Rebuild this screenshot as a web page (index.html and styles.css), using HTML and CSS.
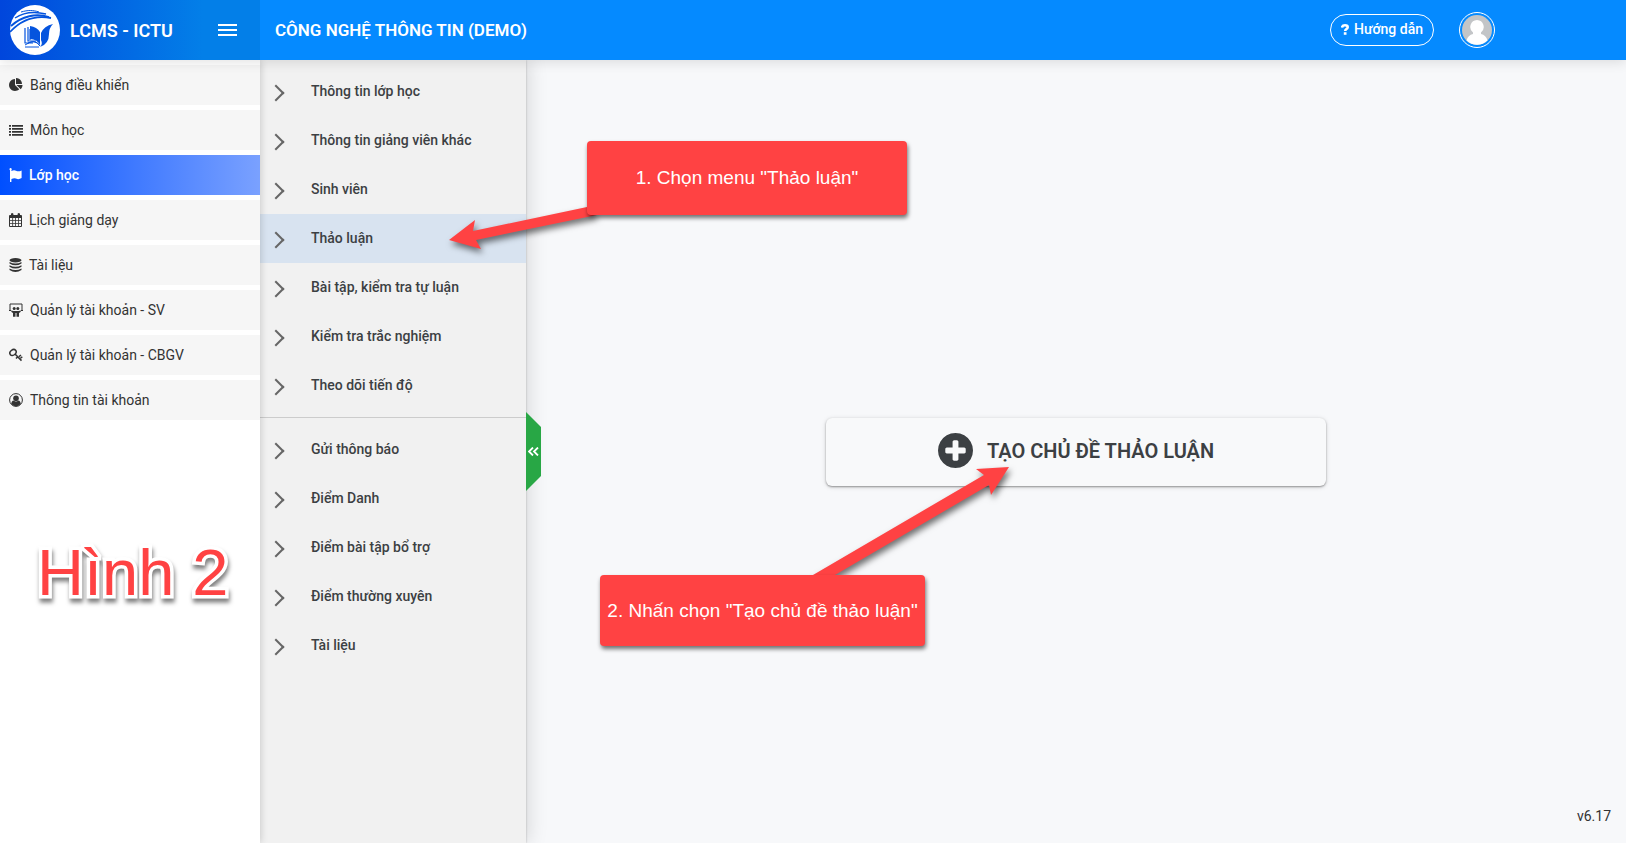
FILE: index.html
```
<!DOCTYPE html>
<html lang="vi">
<head>
<meta charset="utf-8">
<title>LCMS - ICTU</title>
<link rel="stylesheet" href="styles.css">
</head>
<body>
<header class="topbar">
  <div class="brand">
    <svg class="brand-logo" viewBox="0 0 50 50" aria-hidden="true">
      <circle cx="25" cy="25" r="25" fill="#fff"/>
      <g fill="none" stroke="#0554de">
        <path d="M5 13C14 7 24 6 36 9" stroke-width="1.5"/>
        <path d="M11 7C18 5 23 5 29 7" stroke-width="1"/>
        <path d="M1 21C12 11 26 8 39 12" stroke-width="1.8"/>
        <path d="M0 27C11 15 25 10 41 13" stroke-width="1.8"/>
        <path d="M15 23V38H23M18 22V36H26M20 24V35" stroke-width="1.2"/>
        <path d="M15 40Q25 33 30 41M18 38Q26 34 30 41M15 42H29" stroke-width="1"/>
      </g>
      <path d="M20 21Q27 22 30 27V40Q27 34 20 34Z" fill="#0554de"/>
      <path d="M31 28Q34 21 43 19Q39 23 39 29Q39 39 30 42Q33 39 31 35Z" fill="#0554de"/>
    </svg>
    <span class="brand-name">LCMS - ICTU</span>
    <button class="menu-button" type="button" aria-label="Menu">
      <svg viewBox="0 0 20 14" width="20" height="14"><path d="M0 2H19M0 7H19M0 12H19" stroke="#fff" stroke-width="2"/></svg>
    </button>
  </div>
  <h1 class="course-title">CÔNG NGHỆ THÔNG TIN (DEMO)</h1>
  <a class="help" href="#">
    <svg viewBox="0 0 8 11" width="8" height="11" aria-hidden="true"><path d="M1 3.600Q1.400 1.300 4 1.300Q6.700 1.300 6.700 3.300Q6.700 4.600 5.100 5.300Q4.200 5.800 4.200 7" fill="none" stroke="#fff" stroke-width="2.600"/><path d="M2.800 8.200H5.500V10.800H2.800Z" fill="#fff"/></svg>
    Hướng dẫn</a>
  <button class="avatar" type="button" aria-label="Tài khoản">
    <svg viewBox="0 0 30 30" width="30" height="30"><circle cx="15" cy="15" r="15" fill="#c3c5c7"/><path d="M15 5a7 7 0 0 1 4 12.500v1.500q5 1 6.500 6.500A15 15 0 0 1 4.500 25.500Q6 20 11 19v-1.500A7 7 0 0 1 15 5Z" fill="#fff"/></svg>
  </button>
</header>

<div class="layout">
  <nav class="sidebar" aria-label="Chính">
    <a class="side-link" href="#"><svg class="side-icon" viewBox="0 0 1792 1792"><path d="M768 890l546 546q-106 108-247.500 168t-298.500 60q-209 0-385.500-103t-279.500-279.500-103-385.500 103-385.500 279.500-279.500 385.500-103v762zm187 6h773q0 157-60 298.500t-168 247.500zm709-128h-768v-768q209 0 385.500 103t279.500 279.500 103 385.500z"/></svg>Bảng điều khiển</a>
    <a class="side-link" href="#"><svg class="side-icon" viewBox="0 0 14 14"><path d="M0 2h2v1.800H0zM3 2h11v1.800H3zM0 5h2v1.800H0zM3 5h11v1.800H3zM0 8h2v1.800H0zM3 8h11v1.800H3zM0 11h2v1.800H0zM3 11h11v1.800H3z"/></svg>Môn học</a>
    <a class="side-link active" href="#" aria-current="page"><svg class="side-icon narrow" viewBox="0 0 13 14"><path d="M1.500 0a1.300 1.300 0 0 1 .9 2.200V3Q5 1.600 7 2.700Q9.500 4 12.600 2.400V10Q9.500 12 7 10.500Q5 9.600 2.400 11V14H1V2.300A1.300 1.300 0 0 1 1.500 0Z"/></svg>Lớp học</a>
    <a class="side-link" href="#"><svg class="side-icon narrow" viewBox="0 0 13 14"><path fill-rule="evenodd" d="M1 2H2V.8Q3.200-.6 4.400.8V2H8.600V.8Q9.800-.6 11 .8V2H12Q13 2 13 3V13Q13 14 12 14H1Q0 14 0 13V3Q0 2 1 2ZM1 5V7.300H3.300V5ZM4.100 5V7.300H6.200V5ZM7 5V7.300H9.100V5ZM9.900 5V7.300H12V5ZM1 8.100V10.200H3.300V8.100ZM4.100 8.100V10.200H6.200V8.100ZM7 8.100V10.200H9.100V8.100ZM9.900 8.100V10.200H12V8.100ZM1 11V13H3.300V11ZM4.100 11V13H6.200V11ZM7 11V13H9.100V11ZM9.900 11V13H12V11Z"/></svg>Lịch giảng dạy</a>
    <a class="side-link" href="#"><svg class="side-icon narrow" viewBox="0 0 12 14"><ellipse cx="6" cy="2.200" rx="6" ry="2.200"/><path d="M0 4Q6 7.200 12 4V5.500Q6 9.200 0 5.500ZM0 7.200Q6 10.400 12 7.200V8.700Q6 12.400 0 8.700ZM0 10.400Q6 13.600 12 10.400V12Q6 16 0 12Z"/></svg>Tài liệu</a>
    <a class="side-link" href="#"><svg class="side-icon" viewBox="0 0 14 14"><path d="M1 7.500V1H13V7.500M0 7.500H2M12 7.500H14" fill="none" stroke="currentColor" stroke-width="1"/><circle cx="5.200" cy="5.500" r="1.500"/><circle cx="8.800" cy="5.500" r="1.500"/><path d="M2 7.600Q7 8.600 12 7.600Q12 9.500 10 10V13.800H7.500V10H6.500V13.800H4V10Q2 9.500 2 7.600Z"/></svg>Quản lý tài khoản - SV</a>
    <a class="side-link" href="#"><svg class="side-icon" viewBox="0 0 14 14"><g fill="none" stroke="currentColor" stroke-width="1.500"><ellipse cx="4" cy="4.500" rx="3.400" ry="2.600" transform="rotate(-40 4 4.500)"/><path d="M6 6L12.500 12.600M8.500 9L7 10.600M10 8.600L12 7M11.500 10.300L13.300 8.700"/></g></svg>Quản lý tài khoản - CBGV</a>
    <a class="side-link" href="#"><svg class="side-icon" viewBox="0 0 14 14"><circle cx="7" cy="7" r="6.400" fill="none" stroke="currentColor"/><circle cx="7" cy="5.300" r="2.800"/><path d="M2.200 11Q2.600 7.800 4.600 7.600Q7 9.600 9.400 7.600Q11.400 7.800 11.800 11Q7 15.500 2.200 11Z"/></svg>Thông tin tài khoản</a>
  </nav>

  <nav class="submenu" aria-label="Lớp học">
    <div class="menu-group">
      <a class="sub-link" href="#">Thông tin lớp học</a>
      <a class="sub-link" href="#">Thông tin giảng viên khác</a>
      <a class="sub-link" href="#">Sinh viên</a>
      <a class="sub-link selected" href="#" aria-current="page">Thảo luận</a>
      <a class="sub-link" href="#">Bài tập, kiểm tra tự luận</a>
      <a class="sub-link" href="#">Kiểm tra trắc nghiệm</a>
      <a class="sub-link" href="#">Theo dõi tiến độ</a>
    </div>
    <div class="menu-group">
      <a class="sub-link" href="#">Gửi thông báo</a>
      <a class="sub-link" href="#">Điểm Danh</a>
      <a class="sub-link" href="#">Điểm bài tập bổ trợ</a>
      <a class="sub-link" href="#">Điểm thường xuyên</a>
      <a class="sub-link" href="#">Tài liệu</a>
    </div>
    <button class="collapse" type="button" aria-label="Thu gọn">
      <svg viewBox="0 0 11 9" width="11" height="9"><path d="M5 .5L1 4.500L5 8.500M10 .5L6 4.500L10 8.500" fill="none" stroke="#fff" stroke-width="1.800"/></svg>
    </button>
  </nav>

  <main class="content">
    <button class="create" type="button">
      <svg viewBox="128 128 1536 1536" width="35" height="35" aria-hidden="true"><path fill="currentColor" d="M1344 960v-128q0-26-19-45t-45-19h-256v-256q0-26-19-45t-45-19h-128q-26 0-45 19t-19 45v256h-256q-26 0-45 19t-19 45v128q0 26 19 45t45 19h256v256q0 26 19 45t45 19h128q26 0 45-19t19-45v-256h256q26 0 45-19t19-45zm320-64q0 209-103 385.500t-279.500 279.500-385.500 103-385.500-103-279.500-279.500-103-385.500 103-385.500 279.500-279.500 385.500-103 385.500 103 279.500 279.500 103 385.500z"/></svg>
      TẠO CHỦ ĐỀ THẢO LUẬN
    </button>
    <span class="version">v6.17</span>
  </main>
</div>

<div class="notes">
  <svg class="arrows" width="1100" height="660" aria-hidden="true">
    <path d="M449 240L475 220L473 231L587 207L597 215L476 240L481 249Z"/>
    <path d="M1009 467L976 469L984 475L813 575V580H826L835 575L989 485L991 495Z"/>
  </svg>
  <p class="note note-menu">1. Chọn menu "Thảo luận"</p>
  <p class="note note-create">2. Nhấn chọn "Tạo chủ đề thảo luận"</p>
  <p class="figure-label">Hình 2</p>
</div>
</body>
</html>
```
FILE: styles.css
```
* {
  box-sizing: border-box;
}

body {
  margin: 0;
  min-height: 100vh;
  display: flex;
  flex-direction: column;
  position: relative;
  font-family: Roboto, "Noto Sans", sans-serif;
  font-size: 14px;
  color: #333;
  background: #f7f8fa;
}

a {
  color: inherit;
  text-decoration: none;
}

button {
  font: inherit;
  color: inherit;
  border: 0;
  padding: 0;
  background: none;
  cursor: pointer;
}

svg {
  display: block;
  flex: none;
}

.topbar {
  display: flex;
  align-items: center;
  height: 60px;
  padding-right: 131px;
  background: #058aff;
  color: #fff;
  box-shadow: 0 2px 12px rgba(0, 0, 0, 0.12);
  position: relative;
  z-index: 3;
}

.brand {
  display: flex;
  align-items: center;
  width: 260px;
  height: 60px;
  padding: 0 22px 0 10px;
  background: linear-gradient(90deg, #0046dc, #037fe8 78%);
}

.brand-logo {
  width: 50px;
  height: 50px;
}

.brand-name {
  flex: 1;
  margin-left: 10px;
  font-size: 18px;
  font-weight: 600;
}

.course-title {
  flex: 1;
  margin: 0 0 0 15px;
  font-size: 17px;
  font-weight: 600;
}

.help {
  display: flex;
  align-items: center;
  justify-content: center;
  gap: 5px;
  height: 32px;
  padding: 0 10px 2px;
  border: 1px solid #fff;
  border-radius: 16px;
  font-weight: 500;
}

.avatar {
  display: grid;
  place-items: center;
  width: 36px;
  height: 36px;
  margin-left: 25px;
  border: 1px solid #fff;
  border-radius: 50%;
}

.layout {
  flex: 1;
  display: flex;
}

.sidebar {
  width: 260px;
  display: flex;
  flex-direction: column;
  gap: 5px;
  padding-top: 5px;
  background: #fff;
  box-shadow: 0 0 8px rgba(0, 0, 0, 0.2);
  z-index: 2;
}

.side-link {
  display: flex;
  align-items: center;
  gap: 7px;
  height: 40px;
  padding: 0 9px;
  background: #f6f6f6;
}

.side-link.active {
  color: #fff;
  font-weight: 500;
  background: linear-gradient(90deg, #004fff, #7aa1ff);
}

.side-icon {
  width: 14px;
  height: 14px;
  fill: currentColor;
}

.side-icon.narrow {
  width: 13px;
}

.submenu {
  position: relative;
  z-index: 1;
  width: 266px;
  background: #f1f1f1;
  box-shadow: 0 0 2px rgba(0, 0, 0, 0.25), 3px 0 18px rgba(0, 0, 0, 0.13);
}

.menu-group {
  padding: 7px 0;
}

.menu-group + .menu-group {
  border-top: 1px solid #ccc;
}

.sub-link {
  display: flex;
  align-items: center;
  gap: 29px;
  height: 49px;
  padding: 0 10px 2px;
  font-weight: 500;
  color: #3c4043;
}

.sub-link::before {
  content: "";
  width: 10px;
  height: 10px;
  margin-top: 4px;
  border: solid #666;
  border-width: 2px 2px 0 0;
  transform: rotate(45deg);
}

.sub-link.selected {
  background: #d8e3f0;
}

.collapse {
  position: absolute;
  left: 100%;
  top: 352px;
  width: 15px;
  height: 79px;
  display: grid;
  place-items: center;
  background: #28a745;
  clip-path: polygon(0 0, 100% 15px, 100% 64px, 0 100%);
}

.content {
  flex: 1;
  position: relative;
  display: grid;
  place-items: center;
}

.create {
  display: flex;
  align-items: center;
  justify-content: center;
  gap: 14px;
  width: 500px;
  max-width: 90%;
  height: 68px;
  padding-bottom: 2px;
  border-radius: 6px;
  font-size: 20px;
  font-weight: 600;
  color: #3c4043;
  background: #f8f9fa;
  box-shadow: 0 1px 2px rgba(0, 0, 0, 0.35), 0 1px 5px rgba(0, 0, 0, 0.15);
}

.version {
  position: absolute;
  right: 15px;
  bottom: 19px;
}

.notes {
  position: absolute;
  inset: 0;
  z-index: 4;
  pointer-events: none;
}

.arrows {
  position: absolute;
  left: 0;
  top: 0;
  fill: #ff4243;
  filter: drop-shadow(2px 4px 3px rgba(0, 0, 0, 0.55));
}

.note {
  position: absolute;
  display: grid;
  place-items: center;
  margin: 0;
  border-radius: 4px;
  background: #ff4243;
  color: #fff;
  font: 19px "Liberation Sans", Arial, sans-serif;
  white-space: nowrap;
  box-shadow: 1px 3px 4px rgba(0, 0, 0, 0.55);
}

.note-menu {
  left: 587px;
  top: 141px;
  width: 320px;
  height: 74px;
}

.note-create {
  left: 600px;
  top: 575px;
  width: 325px;
  height: 71px;
}

.figure-label {
  position: absolute;
  left: 37px;
  top: 536px;
  margin: 0;
  font: 65px/74px "Liberation Sans", Arial, sans-serif;
  color: #ff4243;
  -webkit-text-stroke: 7px #fff;
  paint-order: stroke fill;
  filter: drop-shadow(1px 4px 2px rgba(0, 0, 0, 0.5));
}
```
